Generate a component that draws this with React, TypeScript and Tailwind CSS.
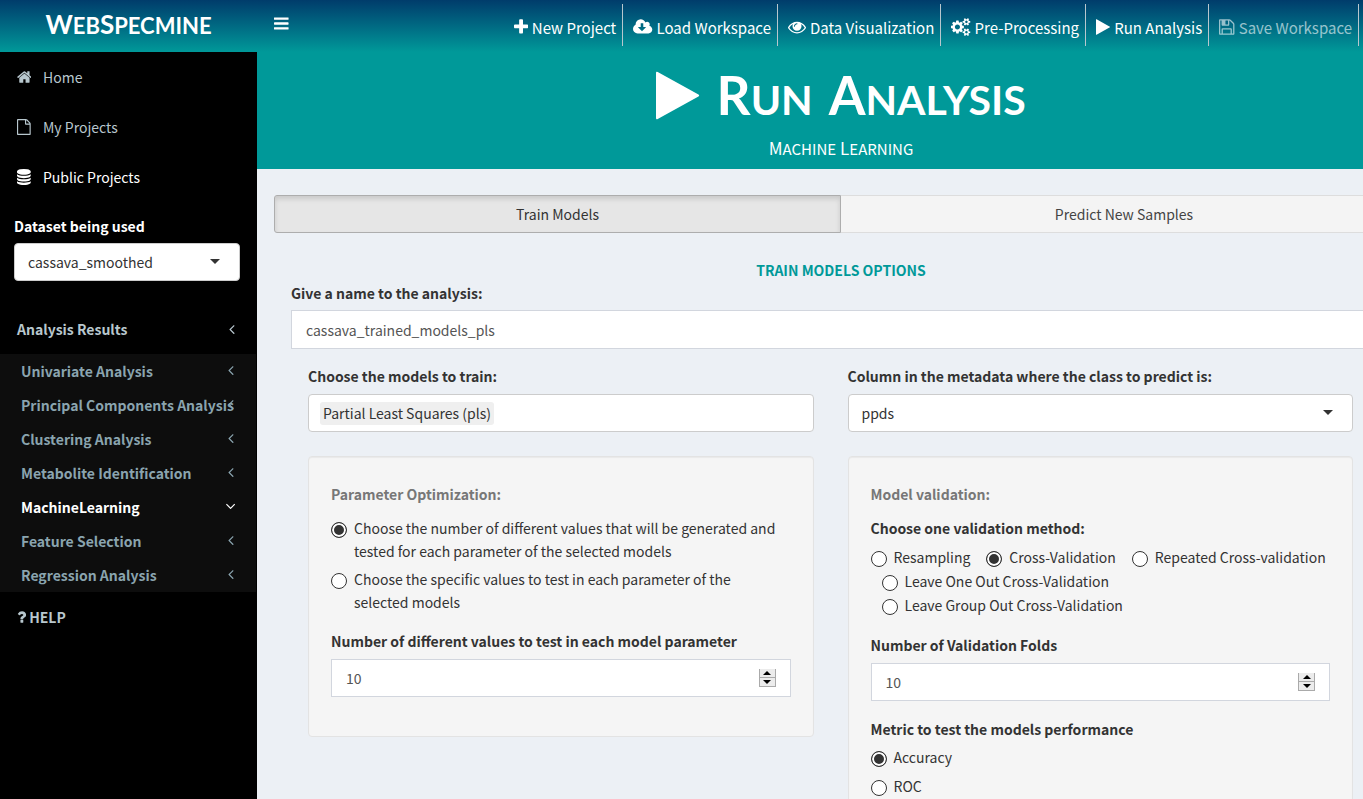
import { useState, type ReactNode } from "react";

const PATHS = {
  plus: "M1600 736v192q0 40-28 68t-68 28h-416v416q0 40-28 68t-68 28h-192q-40 0-68-28t-28-68v-416h-416q-40 0-68-28t-28-68v-192q0-40 28-68t68-28h416v-416q0-40 28-68t68-28h192q40 0 68 28t28 68v416h416q40 0 68 28t28 68z",
  play: "M1576 927l-1328 738q-23 13-39.5 3t-16.5-36v-1472q0-26 16.5-36t39.5 3l1328 738q23 13 23 31t-23 31z",
  home: "M1472 992v480q0 26-19 45t-45 19h-384v-384h-256v384h-384q-26 0-45-19t-19-45v-480q0-1 .5-3t.5-3l575-474 575 474q1 2 1 6zm223-69l-62 74q-8 9-21 11h-3q-13 0-21-7l-692-577-692 577q-12 8-24 7-13-2-21-11l-62-74q-8-10-7-23.5t11-21.5l719-599q32-26 76-26t76 26l244 204v-195q0-14 9-23t23-9h192q14 0 23 9t9 23v408l219 182q10 8 11 21.5t-7 23.5z",
  cloud: "M1216 928q0-14-9-23t-23-9h-224v-352q0-13-9.5-22.5t-22.5-9.5h-192q-13 0-22.5 9.5t-9.5 22.5v352h-224q-13 0-22.5 9.5t-9.5 22.5q0 14 9 23l352 352q9 9 23 9t23-9l351-351q10-12 10-24zm640 224q0 159-112.5 271.5t-271.5 112.5h-1088q-185 0-316.5-131.5t-131.5-316.5q0-130 70-240t188-165q-2-30-2-43 0-212 150-362t362-150q156 0 285.5 87t188.5 231q71-62 166-62 106 0 181 75t75 181q0 76-41 138 130 31 213.5 135.5t83.5 238.5z",
  eye: "M1664 960q-152-236-381-353 61 104 61 225 0 185-131.5 316.5t-316.5 131.5-316.5-131.5-131.5-316.5q0-121 61-225-229 117-381 353 133 205 333.5 326.5t434.5 121.5 434.5-121.5 333.5-326.5zm-720-384q0-20-14-34t-34-14q-125 0-214.5 89.5t-89.5 214.5q0 20 14 34t34 14 34-14 14-34q0-86 61-147t147-61q20 0 34-14t14-34zm848 384q0 34-20 69-140 230-376.5 368.5t-499.5 138.5-499.5-139-376.5-368q-20-35-20-69t20-69q140-229 376.5-368t499.5-139 499.5 139 376.5 368q20 35 20 69z",
  save: "M512 1536h768v-384h-768v384zm896 0h128v-896q0-14-10-38.5t-20-34.5l-281-281q-10-10-34-20t-39-10v416q0 40-28 68t-68 28h-576q-40 0-68-28t-28-68v-416h-128v1280h128v-416q0-40 28-68t68-28h832q40 0 68 28t28 68v416zm-384-928v-320q0-13-9.5-22.5t-22.5-9.5h-192q-13 0-22.5 9.5t-9.5 22.5v320q0 13 9.5 22.5t22.5 9.5h192q13 0 22.5-9.5t9.5-22.5zm640 32v928q0 40-28 68t-68 28h-1344q-40 0-68-28t-28-68v-1344q0-40 28-68t68-28h928q40 0 88 20t76 48l280 280q28 28 48 76t20 88z",
  file: "M1596 380q28 28 48 76t20 88v1152q0 40-28 68t-68 28h-1344q-40 0-68-28t-28-68v-1600q0-40 28-68t68-28h896q40 0 88 20t76 48zm-444-244v376h376q-10-29-22-41l-313-313q-12-12-41-22zm384 1528v-1024h-416q-40 0-68-28t-28-68v-416h-768v1536h1280z",
  database: "M896 768q237 0 443-43t325-127v170q0 69-103 128t-280 93.5-385 34.5-385-34.5-280-93.5-103-128v-170q119 84 325 127t443 43zm0 768q237 0 443-43t325-127v170q0 69-103 128t-280 93.5-385 34.5-385-34.5-280-93.5-103-128v-170q119 84 325 127t443 43zm0-384q237 0 443-43t325-127v170q0 69-103 128t-280 93.5-385 34.5-385-34.5-280-93.5-103-128v-170q119 84 325 127t443 43zm0-1152q208 0 385 34.5t280 93.5 103 128v128q0 69-103 128t-280 93.5-385 34.5-385-34.5-280-93.5-103-128v-128q0-69 103-128t280-93.5 385-34.5z",
  bars: "M1664 1344v128q0 26-19 45t-45 19h-1408q-26 0-45-19t-19-45v-128q0-26 19-45t45-19h1408q26 0 45 19t19 45zm0-512v128q0 26-19 45t-45 19h-1408q-26 0-45-19t-19-45v-128q0-26 19-45t45-19h1408q26 0 45 19t19 45zm0-512v128q0 26-19 45t-45 19h-1408q-26 0-45-19t-19-45v-128q0-26 19-45t45-19h1408q26 0 45 19t19 45z",
  left: "M1203 544q0 13-10 23l-393 393 393 393q10 10 10 23t-10 23l-50 50q-10 10-23 10t-23-10l-466-466q-10-10-10-23t10-23l466-466q10-10 23-10t23 10l50 50q10 10 10 23z",
  down: "M1395 736q0 13-10 23l-466 466q-10 10-23 10t-23-10l-466-466q-10-10-10-23t10-23l50-50q10-10 23-10t23 10l393 393 393-393q10-10 23-10t23 10l50 50q10 10 10 23z",
  question: "M1088 1256v240q0 16-12 28t-28 12h-240q-16 0-28-12t-12-28v-240q0-16 12-28t28-12h240q16 0 28 12t12 28zm316-600q0 54-15.5 101t-35 76.5-55 59.5-57.5 43.5-61 35.5q-41 23-68.5 65t-27.5 67q0 17-12 32.5t-28 15.5h-240q-15 0-25.5-18.5t-10.5-37.5v-45q0-83 65-156.5t143-108.5q59-27 84-56t25-76q0-42-46.5-74t-107.5-32q-65 0-108 29-35 25-107 115-13 16-31 16-12 0-25-8l-164-125q-13-10-15.5-25t5.5-28q160-266 464-266 80 0 161 31t146 83 106 127.5 41 158.5z",
  cogs: "M896 896q0-106-75-181t-181-75-181 75-75 181 75 181 181 75 181-75 75-181zm768 512q0-52-38-90t-90-38-90 38-38 90q0 53 37.5 90.5t90.5 37.5 90.5-37.5 37.5-90.5zm0-1024q0-52-38-90t-90-38-90 38-38 90q0 53 37.5 90.5t90.5 37.5 90.5-37.5 37.5-90.5zm-384 421v185q0 10-7 19.5t-16 10.5l-155 24q-11 35-32 76 34 48 90 115 7 11 7 20 0 12-7 19-23 30-82.5 89.5t-78.5 59.5q-11 0-21-7l-115-90q-37 19-77 31-11 108-23 155-7 24-30 24h-186q-11 0-20-7.5t-10-17.5l-23-153q-34-10-75-31l-118 89q-7 7-20 7-11 0-21-8-144-133-144-160 0-9 7-19 10-14 41-53t47-61q-23-44-35-82l-152-24q-10-1-17-9.5t-7-19.5v-185q0-10 7-19.5t16-10.5l155-24q11-35 32-76-34-48-90-115-7-11-7-20 0-12 7-20 22-30 82-89t79-59q11 0 21 7l115 90q34-18 77-32 11-108 23-154 7-24 30-24h186q11 0 20 7.5t10 17.5l23 153q34 10 75 31l118-89q8-7 20-7 11 0 21 8 144 133 144 160 0 8-7 19-12 16-42 54t-45 60q23 48 34 82l152 23q10 2 17 10.5t7 19.5zm640 533v140q0 16-149 31-12 27-30 52 51 113 51 138 0 4-4 7-122 71-124 71-8 0-46-47t-52-68q-20 2-30 2t-30-2q-14 21-52 68t-46 47q-2 0-124-71-4-3-4-7 0-25 51-138-18-25-30-52-149-15-149-31v-140q0-16 149-31 13-29 30-52-51-113-51-138 0-4 4-7 4-2 35-20t59-34 30-16q8 0 46 46.5t52 67.5q20-2 30-2t30 2q51-71 92-112l6-2q4 0 124 70 4 3 4 7 0 25-51 138 17 23 30 52 149 15 149 31zm0-1024v140q0 16-149 31-12 27-30 52 51 113 51 138 0 4-4 7-122 71-124 71-8 0-46-47t-52-68q-20 2-30 2t-30-2q-14 21-52 68t-46 47q-2 0-124-71-4-3-4-7 0-25 51-138-18-25-30-52-149-15-149-31v-140q0-16 149-31 13-29 30-52-51-113-51-138 0-4 4-7 4-2 35-20t59-34 30-16q8 0 46 46.5t52 67.5q20-2 30-2t30 2q51-71 92-112l6-2q4 0 124 70 4 3 4 7 0 25-51 138 17 23 30 52 149 15 149 31z",
};

type IconName = keyof typeof PATHS;

const BOXES: Record<IconName, string> = {
  plus: "192 0 1408 1792",
  play: "192 0 1408 1792",
  home: "64 0 1664 1792",
  cloud: "-64 0 1920 1792",
  eye: "0 0 1792 1792",
  save: "128 0 1536 1792",
  bars: "128 0 1536 1792",
  cogs: "0 0 1920 1792",
  file: "128 0 1536 1792",
  database: "128 0 1536 1792",
  left: "576 0 640 1792",
  down: "384 0 1024 1792",
  question: "384 0 1024 1792",
};

function Icon({ name, className }: { name: IconName; className: string }) {
  return (
    <svg viewBox={BOXES[name]} className={`shrink-0 ${className}`} fill="currentColor" aria-hidden="true">
      <path d={PATHS[name]} />
    </svg>
  );
}

const NAV: { icon: IconName; label: string; disabled?: boolean }[] = [
  { icon: "plus", label: "New Project" },
  { icon: "cloud", label: "Load Workspace" },
  { icon: "eye", label: "Data Visualization" },
  { icon: "cogs", label: "Pre-Processing" },
  { icon: "play", label: "Run Analysis" },
  { icon: "save", label: "Save Workspace", disabled: true },
];

const LINKS: { icon: IconName; label: string; active?: boolean }[] = [
  { icon: "home", label: "Home" },
  { icon: "file", label: "My Projects" },
  { icon: "database", label: "Public Projects", active: true },
];

const SECTIONS = [
  "Univariate Analysis",
  "Principal Components Analysis",
  "Clustering Analysis",
  "Metabolite Identification",
  "MachineLearning",
  "Feature Selection",
  "Regression Analysis",
];

function Select({ id, value }: { id: string; value: string }) {
  return (
    <div className="relative">
      <select
        id={id}
        defaultValue={value}
        className="block h-[38px] w-full appearance-none rounded border border-[#ccc] bg-white px-[13px] text-[#333]"
      >
        <option>{value}</option>
      </select>
      <svg viewBox="0 0 10 5" className="pointer-events-none absolute top-4 right-5 h-[5px] w-[10px]" aria-hidden="true">
        <path d="M0 0h10L5 5z" fill="#333" />
      </svg>
    </div>
  );
}

function Radio({ name, label, checked, className = "" }: { name: string; label: string; checked?: boolean; className?: string }) {
  return (
    <label className={`flex items-start gap-[7px] ${className}`}>
      <input
        type="radio"
        name={name}
        defaultChecked={checked}
        className="mt-[5px] size-4 shrink-0 appearance-none rounded-full border border-[#333] bg-white checked:bg-[#333] checked:shadow-[inset_0_0_0_2px_white]"
      />
      <span>{label}</span>
    </label>
  );
}

function NumberField({ id, initial }: { id: string; initial: number }) {
  const [value, setValue] = useState(initial);
  const step = "flex h-[9px] w-[17px] items-center justify-center border border-t-0 border-[#aaa] bg-[#ececec]";
  return (
    <div className="flex h-[38px] items-center border border-[#d2d6de] bg-white pr-[14px]">
      <input
        id={id}
        type="number"
        value={value}
        onChange={(e) => setValue(Number(e.target.value))}
        className="h-full min-w-0 flex-1 appearance-none pl-[14px] text-[#555] outline-none [-moz-appearance:textfield] [&::-webkit-inner-spin-button]:appearance-none"
      />
      <div className="flex flex-col pb-px">
        <button type="button" aria-label="Increase" className={step} onClick={() => setValue(value + 1)}>
          <svg viewBox="0 0 8 4" className="h-1 w-2"><path d="M0 4h8L4 0z" /></svg>
        </button>
        <button type="button" aria-label="Decrease" className={step} onClick={() => setValue(value - 1)}>
          <svg viewBox="0 0 8 4" className="h-1 w-2"><path d="M0 0h8L4 4z" /></svg>
        </button>
      </div>
    </div>
  );
}

function Well({ title, children }: { title: string; children: ReactNode }) {
  return (
    <section className="mt-6 rounded border border-[#e3e3e3] bg-[#f5f5f5] px-[22px] pt-[26px] pb-[39px] shadow-[inset_0_1px_1px_rgba(0,0,0,0.05)]">
      <h3 className="mb-[11px] font-bold text-[#777]">{title}</h3>
      {children}
    </section>
  );
}

export default function App() {
  return (
    <div className="flex h-screen overflow-hidden bg-[#ecf0f5] font-['Noto_Sans_CJK_SC','Noto_Sans',sans-serif] text-[14px] leading-[23px] text-[#333]">
      <aside className="w-[257px] shrink-0 bg-black text-[#b8c7ce]">
        <a
          href="#"
          className="flex h-[52px] justify-center bg-linear-to-b from-[#003c6b] to-[#009999] pt-1 font-['Lato',sans-serif] text-[22px] leading-10 font-bold text-white"
        >
          <span className="inline-block uppercase first-letter:text-[26px]">Web</span>
          <span className="inline-block uppercase first-letter:text-[26px]">Specmine</span>
        </a>
        <nav className="flex flex-col">
          {LINKS.map((l) => (
            <a key={l.label} href="#" className={`flex h-[50px] items-center pl-4 ${l.active ? "text-white" : ""}`}>
              <span className="mr-[11px] flex w-4 justify-center">
                <Icon name={l.icon} className="h-4" />
              </span>
              {l.label}
            </a>
          ))}
        </nav>
        <div className="mt-[13px] pr-[17px] pl-[14px]">
          <label htmlFor="dataset" className="mb-[5px] block font-bold text-white">
            Dataset being used
          </label>
          <Select id="dataset" value="cassava_smoothed" />
        </div>
        <a href="#" className="mt-[23px] flex h-[50px] items-center justify-between pr-[22px] pl-[17px] font-bold">
          Analysis Results
          <Icon name="left" className="h-4" />
        </a>
        <nav className="mr-px bg-[#0d0d0d] font-bold text-[#8aa4af]">
          {SECTIONS.map((s) => {
            const open = s === "MachineLearning";
            return (
              <a key={s} href="#" className={`relative flex h-[34px] items-center pl-[21px] whitespace-nowrap ${open ? "text-white" : ""}`}>
                {s}
                <span className="absolute top-2 right-5 flex w-[10px] justify-center">
                  <Icon name={open ? "down" : "left"} className="h-4" />
                </span>
              </a>
            );
          })}
        </nav>
        <a href="#" className="flex h-[50px] items-center gap-[3px] pl-[17px] font-bold">
          <Icon name="question" className="h-4" />
          HELP
        </a>
      </aside>

      <div className="flex min-w-0 flex-1 flex-col">
        <header className="flex h-[52px] shrink-0 justify-between bg-linear-to-b from-[#003c6b] to-[#009999] pr-1 pl-[17px] text-white">
          <button type="button" aria-label="Toggle navigation" className="self-start pt-[15px]">
            <Icon name="bars" className="h-[17px]" />
          </button>
          <nav className="flex pt-1 text-[15px]">
            {NAV.map((n) => (
              <a
                key={n.label}
                href="#"
                className={`flex h-[42px] items-center gap-1 border-r border-[#b8c7ce] pt-1 pr-[6px] pl-[10px] whitespace-nowrap ${n.disabled ? "text-white/60" : ""}`}
              >
                <Icon name={n.icon} className="h-[18px]" />
                {n.label}
              </a>
            ))}
          </nav>
        </header>

        <main className="flex-1 overflow-x-hidden overflow-y-auto [scrollbar-width:none]">
          <div className="w-[calc(100%+62px)]">
            <div className="flex h-[117px] flex-col items-center bg-[#009999] text-white">
              <h1 className="flex h-[84px] items-center gap-[17px] pt-[2px] font-['Lato',sans-serif] text-[41px] leading-[60px] font-bold">
                <Icon name="play" className="h-[55px]" />
                <span className="flex gap-4 pt-1">
                  <span className="inline-block uppercase first-letter:text-[53px]">Run</span>
                  <span className="inline-block uppercase first-letter:text-[53px]">Analysis</span>
                </span>
              </h1>
              <h2 className="flex gap-1 text-[15px]">
                <span className="inline-block uppercase first-letter:text-[17px]">Machine</span>
                <span className="inline-block uppercase first-letter:text-[17px]">Learning</span>
              </h2>
            </div>

            <div className="px-[17px] pt-[26px] pb-6">
              <div className="grid grid-cols-2">
                <button type="button" className="h-[38px] rounded-l-[3px] border border-[#adadad] bg-[#e6e6e6] shadow-[inset_0_3px_5px_rgba(0,0,0,0.125)]">
                  Train Models
                </button>
                <button type="button" className="h-[38px] rounded-r-[3px] border border-l-0 border-[#ddd] bg-[#f4f4f4] text-[#444]">
                  Predict New Samples
                </button>
              </div>

              <form className="px-[17px] pt-[26px]">
                <h2 className="text-center font-bold text-[#009999]">TRAIN MODELS OPTIONS</h2>
                <label htmlFor="name" className="mb-[5px] block font-bold">
                  Give a name to the analysis:
                </label>
                <input
                  id="name"
                  type="text"
                  defaultValue="cassava_trained_models_pls"
                  className="block h-[39px] w-full border border-[#d2d6de] bg-white px-[14px] text-[#555]"
                />

                <div className="mt-4 grid grid-cols-2 items-start gap-[34px] pr-[38px] pl-[17px]">
                  <div>
                    <label htmlFor="models" className="mb-[6px] block font-bold">
                      Choose the models to train:
                    </label>
                    <div className="flex h-[38px] items-center rounded border border-[#ccc] bg-white px-[11px]">
                      <span className="rounded-[3px] bg-[#efefef] px-[3px]">Partial Least Squares (pls)</span>
                      <input id="models" type="text" className="min-w-0 flex-1 outline-none" />
                    </div>
                    <Well title="Parameter Optimization:">
                      <div className="flex flex-col gap-[5px] pr-3">
                        <Radio
                          name="optimization"
                          checked
                          label="Choose the number of different values that will be generated and tested for each parameter of the selected models"
                        />
                        <Radio name="optimization" label="Choose the specific values to test in each parameter of the selected models" />
                      </div>
                      <label htmlFor="values" className="mt-4 mb-[6px] block font-bold">
                        Number of different values to test in each model parameter
                      </label>
                      <NumberField id="values" initial={10} />
                    </Well>
                  </div>

                  <div>
                    <label htmlFor="column" className="mb-[6px] block font-bold">
                      Column in the metadata where the class to predict is:
                    </label>
                    <Select id="column" value="ppds" />
                    <Well title="Model validation:">
                      <p className="mb-[6px] font-bold">Choose one validation method:</p>
                      <div className="flex flex-wrap gap-x-4 gap-y-px whitespace-nowrap">
                        <Radio name="validation" label="Resampling" />
                        <Radio name="validation" checked label="Cross-Validation" />
                        <Radio name="validation" label="Repeated Cross-validation" />
                        <Radio name="validation" label="Leave One Out Cross-Validation" className="w-full pl-[11px]" />
                        <Radio name="validation" label="Leave Group Out Cross-Validation" className="w-full pl-[11px]" />
                      </div>
                      <label htmlFor="folds" className="mt-[17px] mb-[6px] block font-bold">
                        Number of Validation Folds
                      </label>
                      <NumberField id="folds" initial={10} />
                      <p className="mt-[17px] mb-[5px] font-bold">Metric to test the models performance</p>
                      <div className="flex flex-col gap-[6px]">
                        <Radio name="metric" checked label="Accuracy" />
                        <Radio name="metric" label="ROC" />
                      </div>
                    </Well>
                  </div>
                </div>
              </form>
            </div>
          </div>
        </main>
      </div>
    </div>
  );
}
